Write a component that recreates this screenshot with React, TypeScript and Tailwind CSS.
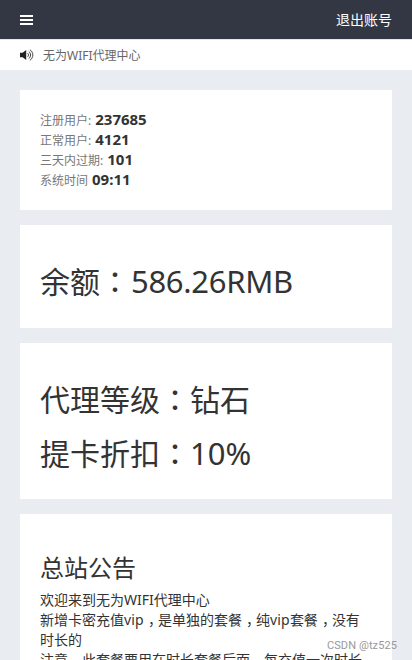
import type { ReactNode } from 'react';

const stats = [
  { label: '注册用户:', value: '237685' },
  { label: '正常用户:', value: '4121' },
  { label: '三天内过期:', value: '101' },
  { label: '系统时间', value: '09:11' },
];

function Card({ children, className = '' }: { children: ReactNode; className?: string }) {
  return <section className={`shrink-0 bg-white px-5 ${className}`}>{children}</section>;
}

// Full-width colon, centred in its cell
function Colon() {
  return <span className="font-['Noto_Sans_CJK_TC',sans-serif]" lang="zh-TW">：</span>;
}

// Half-width form of the comma, padded back out to a full cell
function Comma() {
  return <span className="inline-block w-[14px] pl-1 [font-feature-settings:'halt']">，</span>;
}

function BarsIcon() {
  return (
    <svg width="13" height="10" viewBox="0 0 13 10" fill="currentColor">
      <rect width="13" height="2" />
      <rect y="4" width="13" height="2" />
      <rect y="8" width="13" height="2" />
    </svg>
  );
}

function VolumeIcon() {
  return (
    <svg width="14" height="12" viewBox="0 0 14 12" fill="none">
      <path d="M0 3.8h2.6L6.2 1v10L2.6 8.2H0z" fill="#222" />
      <path
        d="M7.6 4.2c1.2.9 1.2 2.7 0 3.6M8.7 2.4c2.5 1.7 2.5 5.5 0 7.2M9.9.7c3.9 2.5 3.9 8.1 0 10.6"
        stroke="#333"
        strokeWidth="0.9"
      />
    </svg>
  );
}

export default function App() {
  return (
    <div className="relative flex h-[660px] w-[412px] flex-col overflow-hidden bg-[#e9edf2] font-['Noto_Sans','Noto_Sans_CJK_SC',sans-serif] text-sm leading-5 text-[#333]" lang="zh-CN">
      <header className="flex h-10 shrink-0 items-center justify-between border-b border-[#e7e7e7] bg-[#333743] px-5 text-white">
        <button aria-label="菜单" className="pt-px">
          <BarsIcon />
        </button>
        <a href="#">退出账号</a>
      </header>

      <div className="flex h-[30px] shrink-0 items-center gap-[9px] bg-white px-5 text-xs text-[#666]">
        <VolumeIcon />
        <span className="pt-px">无为WIFI代理中心</span>
      </div>

      <main className="flex flex-col gap-[15px] px-5 pt-5">
        <Card className="h-[120px] pt-[19px]">
          {stats.map((s) => (
            <div key={s.label} className="flex h-5 items-baseline gap-1 whitespace-nowrap">
              <span className="text-xs leading-5 text-[#777]">{s.label}</span>
              <b className="text-[15px] leading-5">{s.value}</b>
            </div>
          ))}
        </Card>

        <Card className="h-[103px] pt-[39px]">
          <h1 className="text-[30px] leading-[33px]">
            余额<Colon /><span className="pl-px text-[31px] tracking-[-0.3px]">586.26RMB</span>
          </h1>
        </Card>

        <Card className="h-[156px] pt-[39px]">
          <h1 className="text-[30px] leading-[33px]">
            代理等级<Colon />钻石
          </h1>
          <h1 className="mt-5 text-[30px] leading-[33px]">
            提卡折扣<Colon /><span className="text-[31px]">10%</span>
          </h1>
        </Card>

        <Card className="h-[180px] pt-[41px]">
          <h3 className="mb-[9px] text-2xl leading-[26px]">总站公告</h3>
          <p>欢迎来到无为WIFI代理中心</p>
          <p className="whitespace-nowrap">
            新增卡密充值<span className="tracking-[0.2px]">vip</span><Comma />是单独的套餐<Comma />纯<span className="tracking-[0.2px]">vip</span>套餐<Comma />没有
          </p>
          <p>时长的</p>
          <p className="whitespace-nowrap">
            注意<Comma />此套餐要用在时长套餐后面<Comma />每充值一次时长
          </p>
        </Card>
      </main>

      <span className="absolute right-[15px] bottom-[6px] font-[Roboto,sans-serif] text-[11px] leading-4 tracking-[0.1px] text-[#999]">
        CSDN @tz525
      </span>
    </div>
  );
}
